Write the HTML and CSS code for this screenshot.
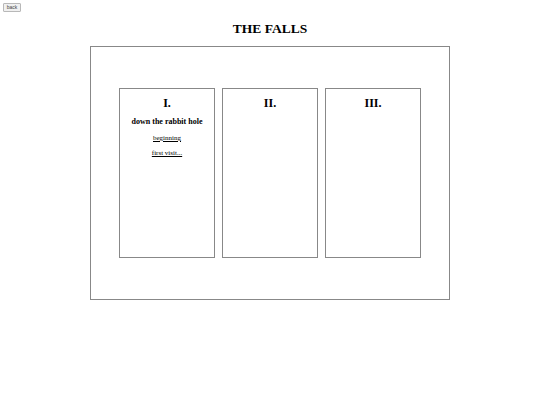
FILE: index.html
```html
<!DOCTYPE html>
<html>
<head>
<meta charset="utf-8">
<link rel="stylesheet" href="styles.css">
</head>
<body>
<div class="top"><button class="back">back</button></div>
<h1 class="title">THE FALLS</h1>
<div class="frame">
  <div class="cols">
    <div class="col">
      <h2 class="num">I.</h2>
      <h3 class="sub">down the rabbit hole</h3>
      <p class="link first"><a href="#">beginning</a></p>
      <p class="link"><a href="#">first visit...</a></p>
    </div>
    <div class="col">
      <h2 class="num">II.</h2>
    </div>
    <div class="col">
      <h2 class="num">III.</h2>
    </div>
  </div>
</div>
</body>
</html>
```
FILE: styles.css
```css
html, body {
  margin: 0;
  padding: 0;
  background: #fff;
  font-family: "Liberation Serif", "Times New Roman", serif;
  color: #000;
}
.top {
  height: 12px;
  padding: 3px 0 0 3px;
  box-sizing: border-box;
}
.back {
  display: block;
  height: 9px;
  width: 18px;
  padding: 0;
  font-family: "Liberation Sans", Arial, sans-serif;
  font-size: 5px;
  line-height: 7px;
  background: #f0f0f0;
  border: 1px solid #b8b8b8;
  border-radius: 1px;
  color: #444;
}
.title {
  margin: 0;
  height: 34px;
  line-height: 34px;
  font-size: 13.5px;
  font-weight: bold;
  text-align: center;
}
.frame {
  width: 360px;
  height: 254px;
  margin: 0 0 0 90px;
  box-sizing: border-box;
  border: 1px solid #888;
  display: flex;
  align-items: center;
  justify-content: center;
}
.cols {
  display: flex;
  gap: 7px;
}
.col {
  width: 96px;
  height: 170px;
  box-sizing: border-box;
  border: 1px solid #888;
  text-align: center;
}
.num {
  margin: 6px 0 0 0;
  font-size: 12px;
  line-height: 16px;
  font-weight: bold;
}
.sub {
  margin: 6px 0 0 0;
  font-size: 8px;
  line-height: 10px;
  font-weight: bold;
}
.link {
  margin: 6px 0 0 0;
  font-size: 7px;
  line-height: 9px;
}
.link.first {
  margin-top: 7px;
}
.link a {
  color: #000;
}
```
